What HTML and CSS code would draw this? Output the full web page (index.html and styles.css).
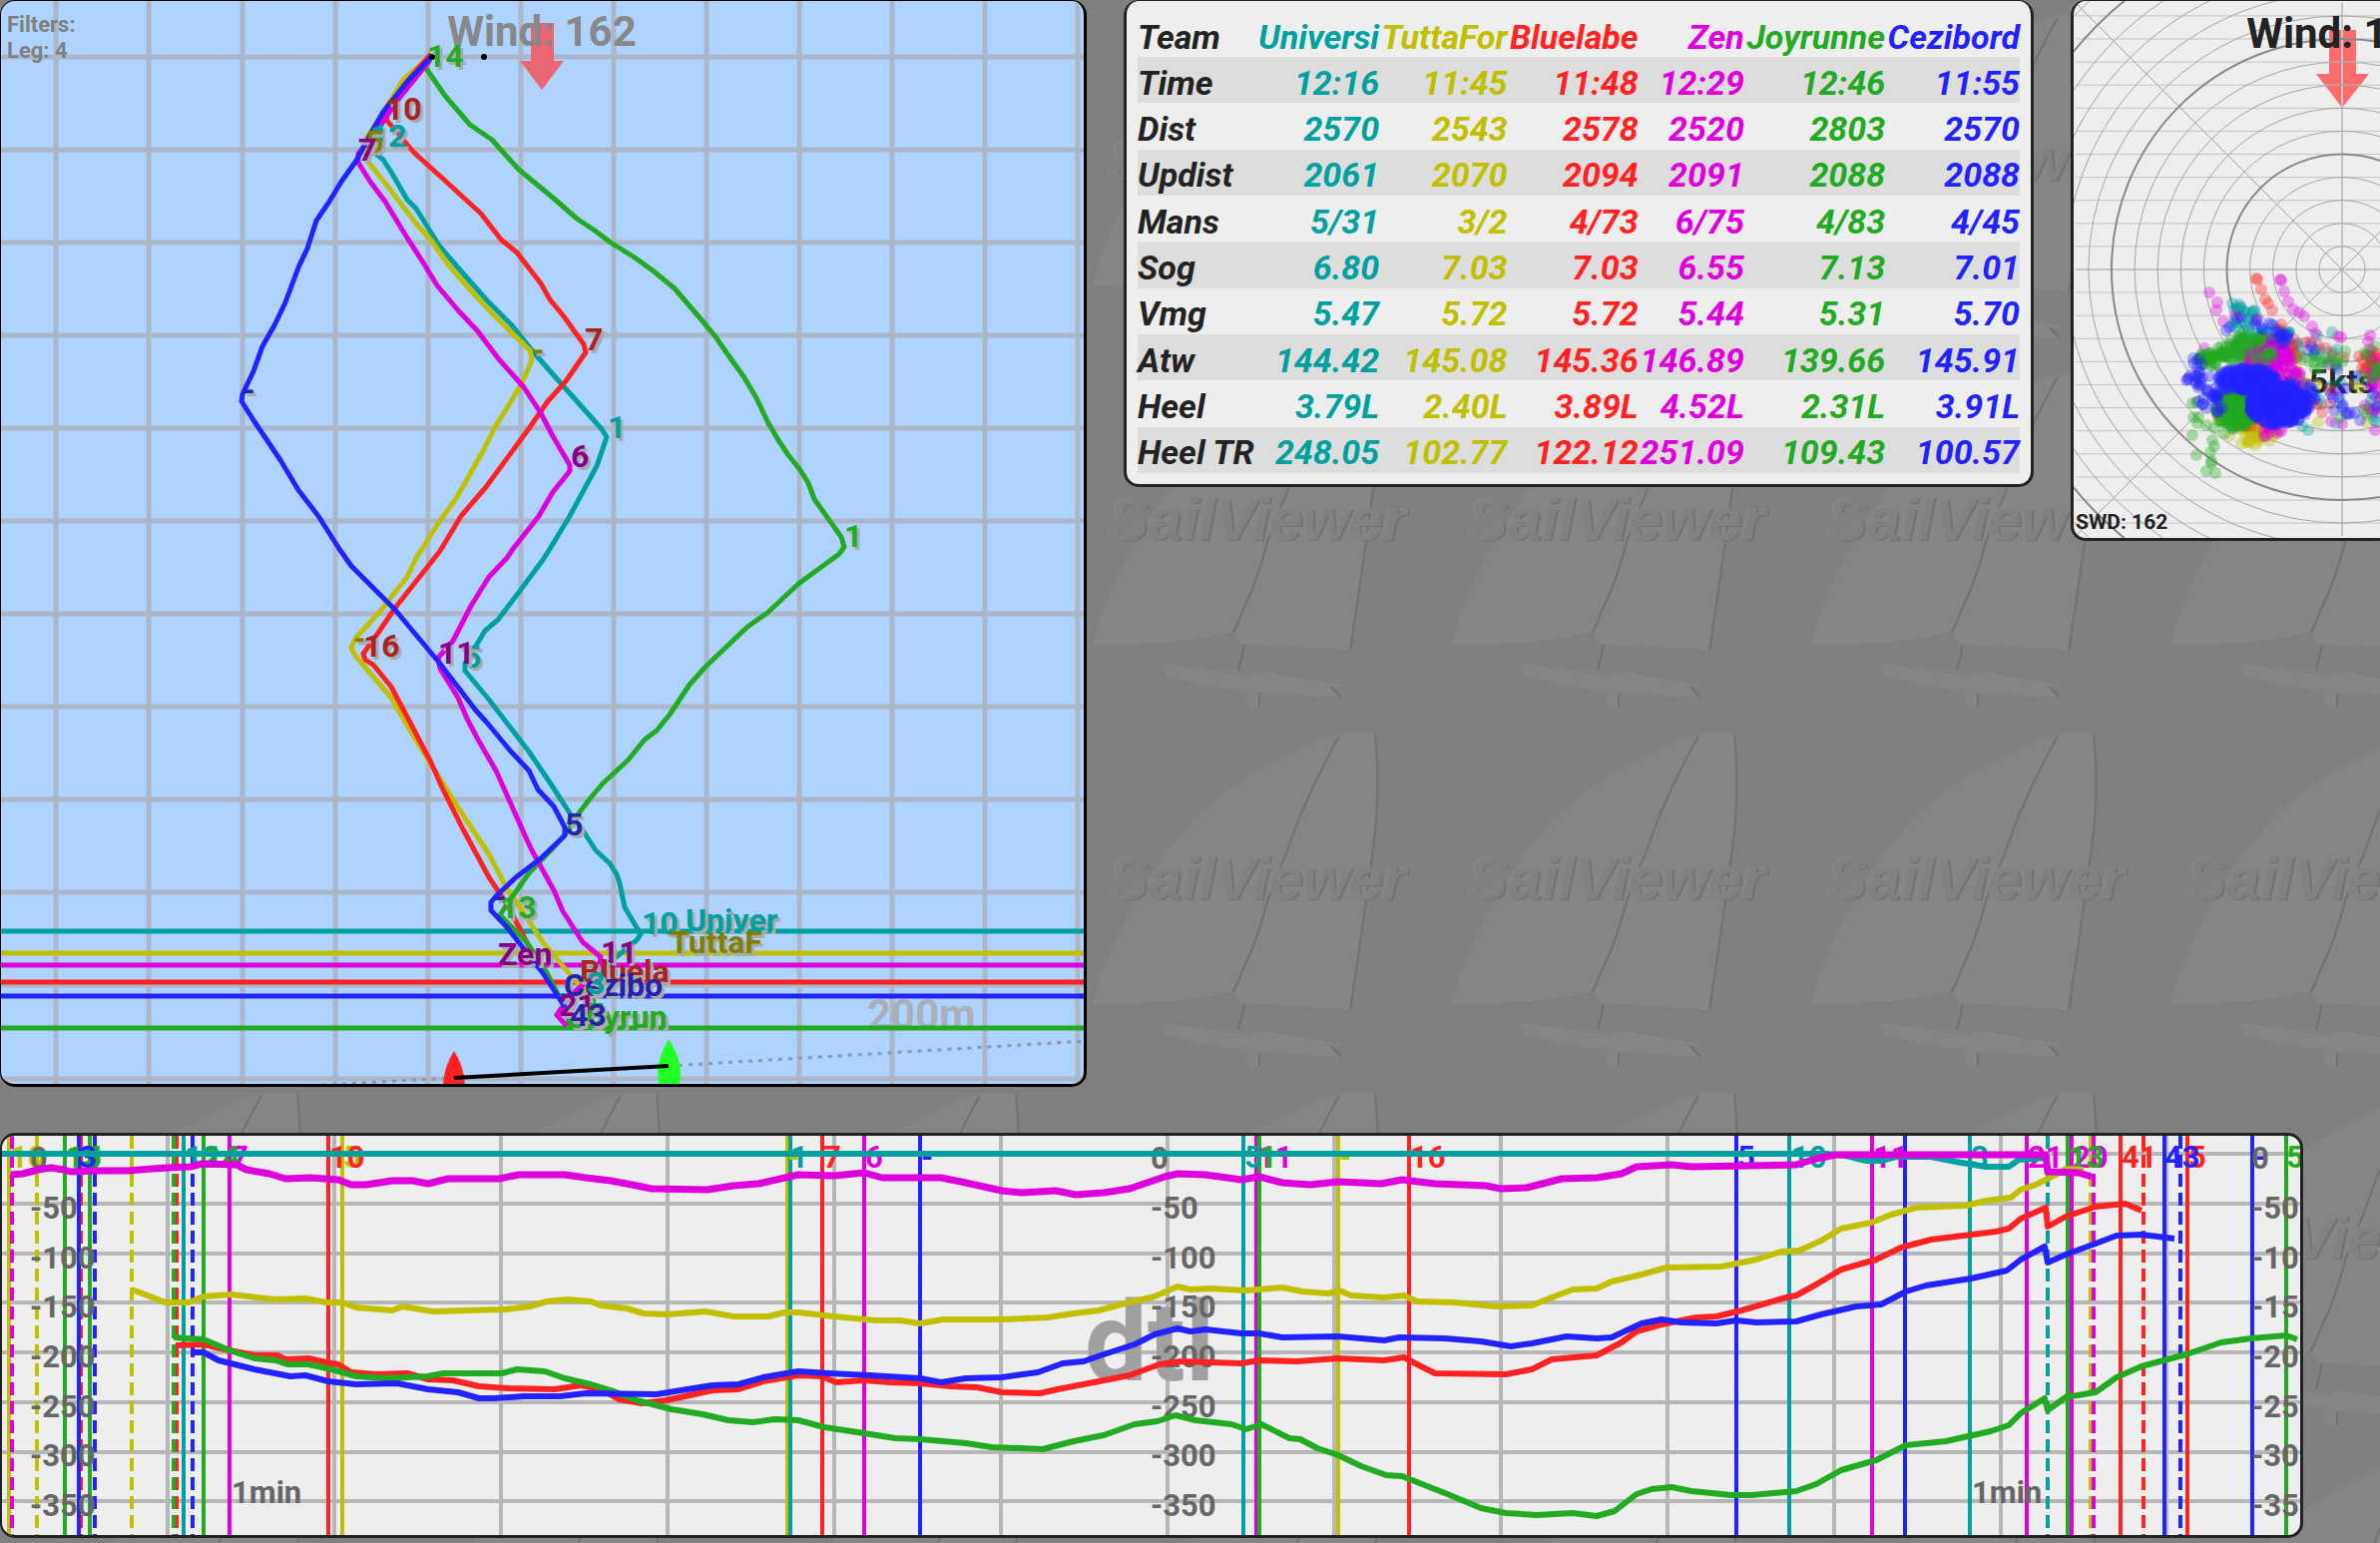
FILE: index.html
```html
<!DOCTYPE html>
<html lang="en">
<head>
<meta charset="utf-8">
<title>SailViewer</title>
<link rel="stylesheet" href="styles.css">
</head>
<body>
<svg class="backdrop" aria-hidden="true">
  <defs>
    <pattern id="sail-tile" width="360" height="360" patternUnits="userSpaceOnUse">
      <g class="emboss">
        <path class="light" d="M262 15H298Q304 70 296 130L289 182L273 293L167 286L160 312L175 317L187 312L275 327L254 328L262 339L182 334V348H170V332L131 327L89 317L83 304L160 312L165 287L156 274Q120 284 63 286L14 286Q28 236 58 183Q82 140 107 113Q160 50 262 15Z"/>
        <path class="gap" d="M156 274Q120 284 63 286L29 287L80 303L160 312L167 286L158 280Z"/>
        <path class="dark" d="M262 17Q228 80 211 129L191 180Q180 220 172 237L156 274"/>
        <path class="dark" d="M298 15Q304 70 296 130L289 182L273 293"/>
        <path class="dark" d="M167 286L161 312M254 328L264 339M182 334V348"/>
        <path class="faint" d="M156 274Q120 284 63 286M29 287L80 303L175 317M187 312L275 327M167 286L273 293"/>
      </g>
      <text class="tile-light" x="29" y="180">SailViewer</text>
      <text class="tile-dark" x="33" y="182">SailViewer</text>
      <text class="tile-face" x="31" y="181">SailViewer</text>
    </pattern>
  </defs>
  <rect width="100%" height="100%" fill="url(#sail-tile)"/>
</svg>

<main class="dashboard">
  <section class="top-row">
    <div class="panel map-panel">
      <svg class="plot" viewBox="1 1 1085 1085" role="img" aria-label="Track map">
        <g class="map-grid">
          <path d="M56 0V1090M149 0V1090M243 0V1090M336 0V1090M429 0V1090M522 0V1090M615 0V1090M708 0V1090M801 0V1090M894 0V1090M987 0V1090M1080 0V1090"/>
          <path d="M0 57H1090M0 150H1090M0 243H1090M0 336H1090M0 429H1090M0 522H1090M0 615H1090M0 708H1090M0 801H1090M0 894H1090M0 987H1090M0 1081H1090"/>
        </g>
        <text class="scale" x="869" y="1031">200m</text>
        <path class="wind-arrow" d="M532 23H555V61H565L543 90L521 61H532Z"/>
        <text class="wind dim" x="543" y="46">Wind: 162</text>
        <text class="filters" x="7" y="32">Filters:</text>
        <text class="filters" x="7" y="58">Leg: 4</text>

        <path class="dotted" d="M323 1087L455 1080M670 1068L1090 1043"/>
        <path class="buoy-red" d="M455 1053Q466 1070 466 1090H444Q444 1070 455 1053Z"/>
        <path class="buoy-green" d="M670 1041Q682 1060 682 1074Q682 1084 679 1090H662Q659 1084 659 1074Q659 1060 670 1041Z"/>
        <path class="start-line" d="M455 1080L670 1068"/>

        <g class="levels">
          <path class="s-teal" d="M0 933H1090"/>
          <path class="s-yellow" d="M0 955H1090"/>
          <path class="s-magenta" d="M0 967H1090"/>
          <path class="s-red" d="M0 984H1090"/>
          <path class="s-blue" d="M0 998H1090"/>
          <path class="s-green" d="M0 1030H1090"/>
        </g>
        <g class="tracks">
          <polyline class="s-teal" points="431,60 397,102 379,130 372,146 373,151 384,160 393,174 408,200 417,209 440,246 464,274 489,302 513,326 533,351 554,375 603,430 608,438 598,467 571,517 551,550 544,561 521,592 499,621 486,632 477,647 466,665 466,672 490,701 530,753 553,787 573,818 586,835 597,852 611,865 618,876 621,885 626,909 642,936 638,942 615,961 593,982 595,1009"/>
          <polyline class="s-yellow" points="429,58 404,80 393,98 366,140 366,154 368,161 388,186 417,224 433,242 449,265 469,288 496,317 531,351 533,360 530,368 522,386 496,428 484,452 458,498 440,523 423,550 417,559 408,578 382,611 356,640 352,649 356,657 392,699 414,737 457,806 490,856 508,890 544,944 571,976 591,998 595,1017"/>
          <polyline class="s-red" points="432,54 406,84 386,112 388,121 415,153 446,181 482,214 502,240 518,253 542,284 551,300 565,317 585,345 587,353 567,382 549,402 531,428 487,488 462,517 441,552 396,609 379,634 364,655 366,661 374,666 392,688 410,722 432,764 443,789 463,829 490,879 508,906 530,948 548,975 557,994"/>
          <polyline class="s-green" points="432,57 426,67 446,96 471,125 493,140 520,170 554,198 578,219 596,231 612,243 636,258 654,271 676,289 700,317 716,336 732,359 745,377 757,397 770,424 780,441 790,456 802,471 810,484 816,500 843,538 846,548 841,555 800,585 769,614 749,628 727,649 707,668 691,686 671,716 658,732 646,741 629,762 604,785 593,798 579,816 566,837 530,875 508,906 501,917 512,928 528,944 548,975 568,1013 571,1030"/>
          <polyline class="s-magenta" points="431,60 397,102 379,128 359,154 359,163 371,182 386,202 406,235 424,263 438,286 460,312 478,331 500,360 525,388 542,414 554,437 571,466 571,472 554,493 540,517 514,550 508,559 490,578 472,607 454,642 439,659 441,670 459,699 468,720 479,741 497,772 526,837 533,852 555,892 564,913 584,944 602,959 600,972 585,986 571,998 558,1017 568,1028"/>
          <polyline class="s-blue" points="432,57 408,82 384,112 371,135 357,161 342,182 330,202 317,221 308,249 299,268 286,303 275,326 263,347 254,372 243,395 242,402 254,421 281,461 299,491 319,517 340,550 352,567 396,611 441,665 477,712 488,724 512,753 530,772 539,791 555,808 566,829 566,837 542,860 517,879 497,898 492,904 492,912 508,929 544,975 566,1009"/>
        </g>
        <circle cx="433" cy="57" r="3"/>
        <circle cx="485" cy="57" r="3"/>
        <g class="marks">
          <text class="d-green" x="428" y="67">14</text>
          <text class="d-red" x="386" y="120">10</text>
          <text class="d-teal" x="371" y="147">12</text>
          <text class="d-yellow" x="366" y="153">5</text>
          <text class="d-purple" x="359" y="161">7</text>
          <text class="d-red" x="586" y="351">7</text>
          <text class="d-purple" x="572" y="468">6</text>
          <text class="d-teal" x="609" y="439">1</text>
          <text class="d-yellow" x="533" y="362">-</text>
          <text class="d-blue" x="243" y="402">-</text>
          <text class="d-green" x="846" y="548">1</text>
          <text class="d-yellow" x="354" y="651">-</text>
          <text class="d-red" x="364" y="658">16</text>
          <text class="d-teal" x="464" y="669">5</text>
          <text class="d-purple" x="439" y="665">11</text>
          <text class="d-blue" x="566" y="837">5</text>
          <text class="d-blue" x="495" y="910">-</text>
          <text class="d-green" x="501" y="920">13</text>
          <text class="d-teal" x="643" y="936">10</text>
          <text class="d-teal" x="687" y="933">Univer</text>
          <text class="d-yellow" x="671" y="955">TuttaF</text>
          <text class="d-purple" x="499" y="967">Zen</text>
          <text class="d-purple" x="602" y="965">11</text>
          <text class="d-red" x="581" y="984">Bluela</text>
          <text class="d-blue" x="565" y="998">Cezibo</text>
          <text class="d-teal" x="588" y="996">3</text>
          <text class="d-purple" x="560" y="1018">21</text>
          <text class="d-green" x="569" y="1030">Joyrun</text>
          <text class="d-green" x="588" y="1027">5</text>
          <text class="d-blue" x="571" y="1028">43</text>
        </g>
      </svg>
    </div>

    <div class="panel table-panel">
      <table class="stats">
        <thead>
          <tr><th scope="col">Team</th><th scope="col">Universi</th><th scope="col">TuttaFor</th><th scope="col">Bluelabe</th><th scope="col">Zen</th><th scope="col">Joyrunne</th><th scope="col">Cezibord</th></tr>
        </thead>
        <tbody>
          <tr><th scope="row">Time</th><td>12:16</td><td>11:45</td><td>11:48</td><td>12:29</td><td>12:46</td><td>11:55</td></tr>
          <tr><th scope="row">Dist</th><td>2570</td><td>2543</td><td>2578</td><td>2520</td><td>2803</td><td>2570</td></tr>
          <tr><th scope="row">Updist</th><td>2061</td><td>2070</td><td>2094</td><td>2091</td><td>2088</td><td>2088</td></tr>
          <tr><th scope="row">Mans</th><td>5/31</td><td>3/2</td><td>4/73</td><td>6/75</td><td>4/83</td><td>4/45</td></tr>
          <tr><th scope="row">Sog</th><td>6.80</td><td>7.03</td><td>7.03</td><td>6.55</td><td>7.13</td><td>7.01</td></tr>
          <tr><th scope="row">Vmg</th><td>5.47</td><td>5.72</td><td>5.72</td><td>5.44</td><td>5.31</td><td>5.70</td></tr>
          <tr><th scope="row">Atw</th><td>144.42</td><td>145.08</td><td>145.36</td><td>146.89</td><td>139.66</td><td>145.91</td></tr>
          <tr><th scope="row">Heel</th><td>3.79L</td><td>2.40L</td><td>3.89L</td><td>4.52L</td><td>2.31L</td><td>3.91L</td></tr>
          <tr><th scope="row">Heel TR</th><td>248.05</td><td>102.77</td><td>122.12</td><td>251.09</td><td>109.43</td><td>100.57</td></tr>
        </tbody>
      </table>
    </div>

    <div class="panel polar-panel">
      <svg class="plot" viewBox="2078 1 307 538" role="img" aria-label="Wind polar">
        <path class="polar-arrow" d="M2334 30H2361V74H2374L2347 108L2321 74H2334Z"/>
        <g id="polar-grid" class="polar-grid"></g>
        <text class="wind" x="2346" y="48">Wind: 162</text>
        <text class="swd" x="2080" y="530">SWD: 162</text>
        <text class="knots" x="2347" y="394">5kts</text>
        <g id="polar-dots" class="dots"></g>
      </svg>
    </div>
  </section>

  <section class="panel chart-panel">
    <svg class="plot" viewBox="2 1138 2303 400" role="img" aria-label="Distance to leader">
      <g class="chart-grid">
        <path d="M168 1138V1540M335 1138V1540M502 1138V1540M669 1138V1540M836 1138V1540M1003 1138V1540M1170 1138V1540M1337 1138V1540M1504 1138V1540M1671 1138V1540M1838 1138V1540M2005 1138V1540M2171 1138V1540"/>
        <path d="M0 1156H2310M0 1206H2310M0 1256H2310M0 1305H2310M0 1355H2310M0 1405H2310M0 1455H2310M0 1504H2310"/>
      </g>
      <text class="metric" x="1152" y="1383">dtl</text>
      <g class="events">
        <path class="s-yellow" d="M9 1138V1540M343 1138V1540M789 1138V1540M1341 1138V1540"/>
        <path class="s-yellow dash" d="M37 1138V1540M132 1138V1540M2095 1138V1540"/>
        <path class="s-red dash" d="M81 1138V1540M177 1138V1540M2148 1138V1540"/>
        <path class="s-green dash" d="M174 1138V1540"/>
        <path class="s-magenta dash" d="M12 1138V1540M2098 1138V1540"/>
        <path class="s-blue dash" d="M95 1138V1540M193 1138V1540M2185 1138V1540"/>
        <path class="s-teal dash" d="M2052 1138V1540"/>
        <path class="s-magenta" d="M230 1138V1540M866 1138V1540M1259 1138V1540M1876 1138V1540M2031 1138V1540M2076 1138V1540"/>
        <path class="s-green" d="M65 1138V1540M90 1138V1540M204 1138V1540M1262 1138V1540M2072 1138V1540M2291 1138V1540"/>
        <path class="s-teal" d="M184 1138V1540M792 1138V1540M1246 1138V1540M1793 1138V1540M1974 1138V1540"/>
        <path class="s-red" d="M329 1138V1540M824 1138V1540M1412 1138V1540M2125 1138V1540M2192 1138V1540"/>
        <path class="s-blue" d="M79 1138V1540M922 1138V1540M1740 1138V1540M1909 1138V1540M2169 1138V1540M2257 1138V1540"/>
      </g>
      <g class="event-labels">
        <text class="f-yellow" x="10" y="1170">10</text>
        <text class="f-green" x="66" y="1170">13</text>
        <text class="f-green" x="84" y="1170">5</text>
        <text class="f-blue" x="79" y="1170">3</text>
        <text class="f-teal" x="185" y="1170">12</text>
        <text class="f-magenta" x="231" y="1170">7</text>
        <text class="f-green" x="205" y="1170">14</text>
        <text class="f-yellow" x="344" y="1170">5</text>
        <text class="f-red" x="330" y="1170">10</text>
        <text class="f-yellow" x="789" y="1170">-</text>
        <text class="f-teal" x="792" y="1170">1</text>
        <text class="f-red" x="825" y="1170">7</text>
        <text class="f-magenta" x="867" y="1170">6</text>
        <text class="f-blue" x="923" y="1170">-</text>
        <text class="f-teal" x="1247" y="1170">5</text>
        <text class="f-magenta" x="1260" y="1170">11</text>
        <text class="f-green" x="1262" y="1170">1</text>
        <text class="f-yellow" x="1342" y="1170">-</text>
        <text class="f-red" x="1413" y="1170">16</text>
        <text class="f-blue" x="1741" y="1170">5</text>
        <text class="f-teal" x="1795" y="1170">10</text>
        <text class="f-magenta" x="1877" y="1170">11</text>
        <text class="f-blue" x="1910" y="1170">-</text>
        <text class="f-teal" x="1975" y="1170">3</text>
        <text class="f-magenta" x="2032" y="1170">21</text>
        <text class="f-magenta" x="2077" y="1170">20</text>
        <text class="f-green" x="2073" y="1170">13</text>
        <text class="f-red" x="2126" y="1170">41</text>
        <text class="f-red" x="2193" y="1170">5</text>
        <text class="f-blue" x="2169" y="1170">43</text>
        <text class="f-blue" x="2258" y="1170">-</text>
        <text class="f-green" x="2291" y="1170">5</text>
      </g>
      <g class="axis">
        <text x="30" y="1171">0</text><text x="30" y="1221">-50</text><text x="30" y="1271">-100</text><text x="30" y="1320">-150</text><text x="30" y="1370">-200</text><text x="30" y="1420">-250</text><text x="30" y="1469">-300</text><text x="30" y="1519">-350</text>
        <text x="1153" y="1171">0</text><text x="1153" y="1221">-50</text><text x="1153" y="1271">-100</text><text x="1153" y="1320">-150</text><text x="1153" y="1370">-200</text><text x="1153" y="1420">-250</text><text x="1153" y="1469">-300</text><text x="1153" y="1519">-350</text>
        <text x="2256" y="1171">0</text><text x="2256" y="1221">-50</text><text x="2256" y="1271">-10</text><text x="2256" y="1320">-15</text><text x="2256" y="1370">-20</text><text x="2256" y="1420">-25</text><text x="2256" y="1469">-30</text><text x="2256" y="1519">-35</text>
        <text x="232" y="1506">1min</text><text x="1976" y="1506">1min</text>
      </g>
      <g class="series">
        <polyline class="s-teal" points="2,1156 1830,1156 1850,1158 1870,1163 1885,1163 1900,1159 1935,1159 1960,1164 1990,1169 2013,1169 2023,1162 2051,1160"/>
        <polyline class="s-yellow" points="132,1292 153,1300 166,1305 189,1305 204,1299 232,1297 276,1302 306,1301 327,1305 343,1305 357,1310 393,1313 403,1309 434,1314 505,1312 531,1309 548,1304 569,1302 592,1304 602,1308 628,1311 645,1316 668,1317 707,1314 735,1319 770,1319 786,1315 800,1315 836,1319 877,1323 902,1323 922,1326 945,1322 1004,1322 1050,1320 1076,1316 1101,1313 1127,1306 1157,1299 1180,1289 1193,1292 1213,1291 1249,1293 1285,1290 1305,1294 1331,1296 1342,1293 1354,1298 1387,1300 1407,1298 1420,1304 1458,1305 1499,1309 1535,1308 1555,1300 1576,1292 1600,1291 1615,1284 1645,1277 1670,1270 1725,1269 1760,1262 1785,1254 1803,1253 1825,1243 1845,1231 1875,1225 1895,1217 1920,1210 1970,1208 1990,1203 2015,1200 2025,1192 2040,1187 2060,1177 2070,1171 2088,1172"/>
        <polyline class="s-red" points="176,1348 204,1347 230,1353 255,1358 278,1358 286,1362 309,1361 327,1365 339,1367 352,1375 378,1377 408,1376 429,1382 454,1383 480,1389 510,1391 556,1392 582,1388 602,1392 620,1402 643,1406 668,1403 714,1393 740,1392 765,1384 800,1378 823,1379 838,1385 866,1383 892,1385 922,1386 953,1389 979,1390 1004,1395 1042,1396 1060,1392 1091,1386 1132,1378 1162,1367 1183,1364 1244,1366 1262,1363 1300,1364 1341,1361 1387,1363 1407,1360 1420,1367 1438,1376 1509,1377 1535,1372 1555,1362 1600,1358 1625,1345 1640,1334 1665,1327 1700,1320 1720,1319 1745,1313 1790,1300 1800,1298 1820,1287 1845,1272 1880,1262 1905,1250 1935,1242 2000,1234 2013,1231 2025,1221 2050,1210 2052,1229 2070,1219 2100,1209 2130,1206 2146,1213"/>
        <polyline class="s-green" points="174,1340 204,1342 230,1353 255,1361 276,1363 288,1367 309,1367 332,1372 357,1379 388,1381 429,1379 444,1376 503,1376 518,1372 546,1374 566,1381 592,1387 612,1393 638,1403 673,1412 704,1417 730,1423 755,1425 776,1422 800,1423 826,1430 866,1436 897,1441 922,1442 968,1446 994,1450 1045,1452 1076,1444 1106,1438 1137,1427 1160,1424 1178,1418 1198,1423 1234,1427 1249,1432 1264,1427 1292,1441 1303,1442 1320,1451 1341,1458 1364,1469 1389,1478 1405,1479 1425,1487 1448,1496 1484,1511 1509,1516 1540,1518 1576,1516 1600,1519 1618,1514 1640,1497 1655,1492 1675,1490 1695,1494 1735,1498 1755,1498 1800,1494 1820,1487 1845,1473 1880,1463 1910,1448 1950,1444 1995,1434 2013,1428 2025,1416 2049,1401 2052,1413 2070,1400 2100,1395 2121,1380 2146,1369 2191,1357 2226,1345 2256,1341 2291,1338 2302,1342"/>
        <polyline class="s-blue" points="193,1355 204,1355 219,1363 255,1372 291,1379 306,1378 329,1384 357,1387 398,1386 429,1392 459,1395 480,1401 495,1401 525,1399 561,1399 587,1396 658,1397 689,1392 714,1388 740,1387 765,1380 800,1374 831,1376 871,1378 922,1381 943,1385 968,1381 1004,1380 1040,1375 1065,1366 1086,1364 1106,1357 1137,1347 1157,1337 1180,1331 1193,1334 1208,1332 1244,1336 1262,1336 1285,1340 1341,1339 1387,1343 1402,1340 1448,1341 1484,1344 1514,1349 1535,1346 1570,1339 1600,1341 1615,1340 1645,1326 1665,1322 1685,1325 1720,1326 1740,1323 1760,1325 1800,1324 1825,1317 1860,1309 1885,1307 1910,1294 1930,1288 1975,1281 2011,1273 2025,1262 2049,1249 2052,1265 2070,1257 2100,1246 2121,1238 2146,1237 2179,1241"/>
        <polyline class="s-magenta wide" points="11,1177 23,1176 38,1172 51,1170 64,1172 71,1174 97,1173 128,1173 153,1171 168,1170 191,1169 202,1166 237,1167 247,1172 270,1176 286,1181 311,1180 339,1182 352,1187 367,1187 393,1183 413,1183 429,1186 449,1181 500,1181 520,1177 566,1177 587,1180 612,1183 633,1187 653,1191 709,1192 735,1188 760,1186 791,1179 800,1177 836,1178 866,1175 884,1180 943,1180 963,1184 1004,1193 1024,1195 1058,1193 1078,1197 1106,1195 1132,1191 1167,1179 1180,1176 1208,1177 1244,1182 1262,1179 1285,1185 1313,1187 1341,1184 1384,1186 1405,1182 1438,1186 1489,1188 1504,1191 1530,1190 1565,1181 1600,1180 1625,1176 1640,1169 1675,1167 1695,1169 1800,1167 1820,1161 1840,1157 2050,1157 2052,1174 2083,1175 2096,1179"/>
      </g>
    </svg>
  </section>
</main>
<script src="polar.js"></script>
</body>
</html>
```
FILE: styles.css
```css
* { box-sizing: border-box; }

body {
  margin: 0;
  background: #808080;
  font-family: Roboto, "Liberation Sans", sans-serif;
  font-weight: 700;
  color: #222;
  overflow: hidden;
}

/* embossed sail wallpaper */
.backdrop { position: absolute; inset: 0; width: 100%; height: 100%; }
.light { fill: #858585; }
.gap { fill: #808080; }
.dark { fill: none; stroke: #717171; stroke-width: 2; }
.faint { fill: none; stroke: #7b7b7b; stroke-width: 1; }
.backdrop text { font: italic 700 60px "Liberation Sans", sans-serif; }
.tile-light { fill: #878787; }
.tile-dark { fill: #727272; }
.tile-face { fill: #818181; }

.dashboard {
  position: relative;
  display: flex;
  flex-direction: column;
  gap: 46px;
}
.top-row {
  display: grid;
  grid-template-columns: 1089fr 912fr 310fr;
  column-gap: 37px;
  align-items: start;
}
.panel {
  border: 3px solid #222;
  border-radius: 15px;
  background: #eee;
  overflow: hidden;
}
.top-row .panel { border-top-width: 1px; }
.top-row .map-panel { border-color: #000; border-left-width: 1px; background: #afd3ff; }
.table-panel { padding: 11px; }
.polar-panel { border-right: 0; border-top-right-radius: 0; border-bottom-right-radius: 0; }
.chart-panel { margin-right: 77px; border-left-width: 2px; }
.plot { display: block; width: 100%; height: auto; }

/* team colours */
.s-teal { stroke: #00a0a0; }
.s-yellow { stroke: #c0c000; }
.s-red { stroke: #ff2222; }
.s-magenta { stroke: #dd00dd; }
.s-green { stroke: #22aa22; }
.s-blue { stroke: #2222ff; }
.f-teal { fill: #00a0a0; }
.f-yellow { fill: #c0c000; }
.f-red { fill: #ff2222; }
.f-magenta { fill: #dd00dd; }
.f-green { fill: #22aa22; }
.f-blue { fill: #2222ff; }
.d-teal { fill: #00a0a0; }
.d-yellow { fill: #808000; }
.d-red { fill: #aa2222; }
.d-purple { fill: #880088; }
.d-green { fill: #22aa22; }
.d-blue { fill: #2222aa; }

/* map */
.map-grid { stroke: #abb6c8; stroke-width: 5; }
.scale { font-size: 42px; fill: #aaafb8; }
.wind { font-size: 42px; text-anchor: middle; fill: #222; }
.wind.dim { fill: #888; }
.wind-arrow { fill: #ea6673; }
.filters { font-size: 22px; fill: #808080; }
.levels, .tracks { fill: none; stroke-width: 5; stroke-linejoin: round; }
.marks text { font-size: 32px; text-shadow: 3px 3px 0 #aaa; }
.start-line { stroke: #000; stroke-width: 4; }
.dotted { stroke: #8899b0; stroke-width: 3; stroke-dasharray: 4 6; }
.buoy-red { fill: #ff2222; }
.buoy-green { fill: #22ff22; }

/* table */
.stats {
  width: 100%;
  height: 462px;
  border-collapse: collapse;
  font-size: 34px;
  font-style: italic;
  line-height: 40px;
  white-space: nowrap;
}
.stats th, .stats td { padding: 5px 0 0; text-align: right; font-weight: 700; }
.stats th:first-child { text-align: left; }
.stats tbody tr:nth-child(odd) { background: #ddd; }
.stats tr > :nth-child(2) { color: #00a0a0; }
.stats tr > :nth-child(3) { color: #c0c000; }
.stats tr > :nth-child(4) { color: #ff2222; }
.stats tr > :nth-child(5) { color: #dd00dd; }
.stats tr > :nth-child(6) { color: #22aa22; }
.stats tr > :nth-child(7) { color: #2222ff; }

/* polar */
.polar-arrow { fill: #ff6b6b; }
.polar-grid { fill: none; stroke: #a4a4a4; stroke-width: 1; }
.polar-grid .level { stroke: #c4c4c4; }
.polar-grid .major { stroke: #888; stroke-width: 2; }
.polar-grid .axis-line { stroke: #c4c4c4; stroke-width: 2; }
.swd { font-size: 21px; fill: #222; }
.knots { font-size: 34px; text-anchor: middle; fill: #222; }
.dots { fill-opacity: 0.35; }

/* distance chart */
.chart-grid { stroke: #b6b6b6; stroke-width: 4; }
.metric { font-size: 112px; text-anchor: middle; fill: #a0a0a0; }
.events { stroke-width: 4; }
.events .dash { stroke-dasharray: 13 6; }
.event-labels { font-size: 31px; }
.axis { font-size: 31px; fill: #666; }
.series { fill: none; stroke-width: 6; stroke-linejoin: round; }
.series .wide { stroke-width: 7; }
```
FILE: polar.js
```js
const NS = 'http://www.w3.org/2000/svg';
const CX = 2347, CY = 270, STEP = 23.1;

function add(parent, name, attrs) {
  const el = document.createElementNS(NS, name);
  for (const key in attrs) el.setAttribute(key, attrs[key]);
  parent.appendChild(el);
}

const grid = document.getElementById('polar-grid');
for (let k = -11; k <= 11; k++) {
  add(grid, 'path', { class: 'level', d: `M2080 ${CY + k * STEP}H2390` });
}
add(grid, 'path', { class: 'axis-line', d: `M${CX} 3V537M2080 ${CY}H2390` });
add(grid, 'path', { d: `M${CX - 265} ${CY - 265}L${CX + 265} ${CY + 265}M${CX - 265} ${CY + 265}L${CX + 265} ${CY - 265}` });
for (let k = 1; k <= 16; k++) {
  add(grid, 'circle', { cx: CX, cy: CY, r: k * STEP, class: k % 5 ? 'minor' : 'major' });
}

let seed = 7;
function rnd() {
  seed = (seed * 16807) % 2147483647;
  return seed / 2147483647;
}
// [cx, cy, rx, ry, count]
const boats = [
  { cls: 'f-teal', clusters: [[2246, 318, 16, 14, 22], [2270, 345, 34, 20, 60], [2290, 400, 20, 14, 30], [2330, 350, 20, 18, 9], [2380, 410, 10, 14, 12], [2350, 400, 40, 20, 8]],
    points: [[2237, 304], [2313, 431], [2307, 427], [2341, 424], [2258, 320]] },
  { cls: 'f-yellow', clusters: [[2262, 435, 22, 10, 45], [2240, 420, 20, 14, 20], [2300, 385, 25, 20, 18], [2372, 385, 14, 30, 10]],
    points: [[2246, 444], [2260, 446], [2274, 442], [2323, 423], [2371, 423], [2234, 437], [2312, 384]] },
  { cls: 'f-red', clusters: [[2250, 415, 30, 18, 50], [2275, 355, 30, 16, 35], [2377, 365, 10, 16, 26], [2310, 400, 40, 18, 12]],
    points: [[2261, 279], [2262, 280], [2266, 290], [2270, 300], [2273, 304], [2277, 311], [2286, 325], [2285, 330], [2299, 340], [2311, 343], [2323, 346], [2331, 349], [2338, 356], [2349, 358], [2364, 357], [2315, 343], [2327, 413]] },
  { cls: 'f-magenta', clusters: [[2272, 358, 26, 14, 110], [2285, 385, 26, 22, 60], [2275, 433, 12, 6, 10], [2378, 385, 10, 40, 22]],
    points: [[2285, 280], [2286, 281], [2289, 292], [2293, 302], [2298, 310], [2304, 313], [2309, 317], [2317, 327], [2320, 334], [2343, 337], [2346, 338], [2375, 336], [2373, 342], [2214, 293], [2222, 303], [2221, 311], [2228, 322], [2209, 349], [2240, 316], [2262, 320], [2336, 422], [2347, 425], [2380, 431], [2333, 365]] },
  { cls: 'f-green', clusters: [[2236, 353, 14, 9, 40], [2212, 361, 11, 8, 32], [2250, 341, 16, 7, 26], [2240, 410, 20, 20, 170], [2268, 358, 12, 8, 12], [2325, 362, 28, 10, 16], [2372, 370, 12, 18, 10]],
    points: [[2197, 404], [2201, 403], [2198, 418], [2203, 418], [2202, 424], [2197, 436], [2211, 426], [2219, 429], [2217, 441], [2219, 447], [2201, 456], [2215, 453], [2216, 462], [2216, 464], [2211, 472], [2220, 474], [2229, 434], [2350, 352], [2380, 347], [2369, 410], [2346, 418]] },
  { cls: 'f-blue', clusters: [[2252, 380, 30, 12, 170], [2284, 406, 30, 20, 400], [2270, 390, 32, 16, 80], [2204, 377, 12, 14, 16], [2218, 398, 16, 16, 26], [2286, 338, 10, 9, 14], [2310, 398, 14, 16, 22], [2352, 400, 34, 16, 12]],
    points: [[2198, 359], [2198, 364], [2203, 360], [2191, 381], [2195, 376], [2231, 331], [2234, 328], [2242, 319], [2246, 318], [2261, 321], [2266, 328], [2274, 324], [2277, 325], [2313, 351], [2320, 351], [2316, 346], [2342, 370], [2361, 377], [2365, 421], [2353, 415], [2348, 406], [2268, 330], [2260, 325]] }
];
const dots = document.getElementById('polar-dots');
for (const boat of boats) {
  const spots = boat.points.slice();
  for (const [cx, cy, rx, ry, count] of boat.clusters) {
    for (let i = 0; i < count; i++) {
      const angle = rnd() * Math.PI * 2, r = Math.pow(rnd(), 0.6);
      spots.push([Math.round(cx + Math.cos(angle) * r * rx), Math.round(cy + Math.sin(angle) * r * ry)]);
    }
  }
  for (const [x, y] of spots) add(dots, 'circle', { class: boat.cls, cx: x, cy: y, r: 6 });
}
```
